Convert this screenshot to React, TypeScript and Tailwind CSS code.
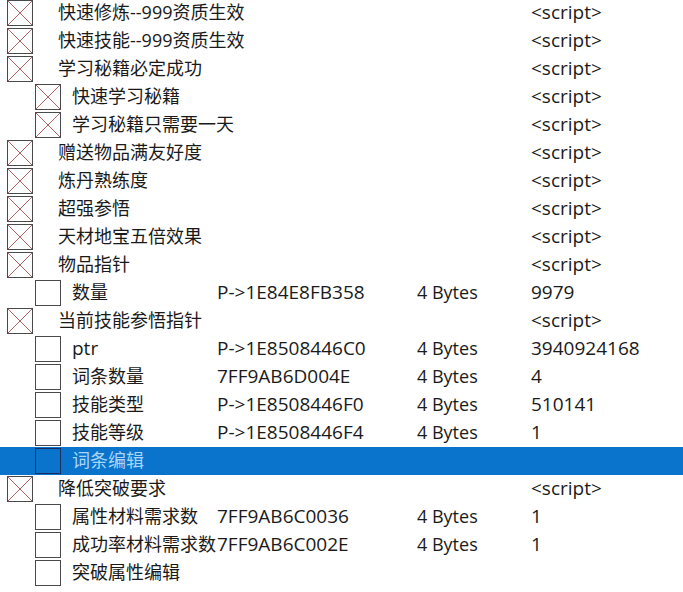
import React from "react";

type Row = {
  level: 0 | 1;
  checked: boolean;
  desc: string;
  addr?: string;
  type?: string;
  value?: string;
  selected?: boolean;
};

const rows: Row[] = [
  { level: 0, checked: true, desc: "快速修炼--999资质生效", value: "<script>" },
  { level: 0, checked: true, desc: "快速技能--999资质生效", value: "<script>" },
  { level: 0, checked: true, desc: "学习秘籍必定成功", value: "<script>" },
  { level: 1, checked: true, desc: "快速学习秘籍", value: "<script>" },
  { level: 1, checked: true, desc: "学习秘籍只需要一天", value: "<script>" },
  { level: 0, checked: true, desc: "赠送物品满友好度", value: "<script>" },
  { level: 0, checked: true, desc: "炼丹熟练度", value: "<script>" },
  { level: 0, checked: true, desc: "超强参悟", value: "<script>" },
  { level: 0, checked: true, desc: "天材地宝五倍效果", value: "<script>" },
  { level: 0, checked: true, desc: "物品指针", value: "<script>" },
  { level: 1, checked: false, desc: "数量", addr: "P->1E84E8FB358", type: "4 Bytes", value: "9979" },
  { level: 0, checked: true, desc: "当前技能参悟指针", value: "<script>" },
  { level: 1, checked: false, desc: "ptr", addr: "P->1E8508446C0", type: "4 Bytes", value: "3940924168" },
  { level: 1, checked: false, desc: "词条数量", addr: "7FF9AB6D004E", type: "4 Bytes", value: "4" },
  { level: 1, checked: false, desc: "技能类型", addr: "P->1E8508446F0", type: "4 Bytes", value: "510141" },
  { level: 1, checked: false, desc: "技能等级", addr: "P->1E8508446F4", type: "4 Bytes", value: "1" },
  { level: 1, checked: false, desc: "词条编辑", selected: true },
  { level: 0, checked: true, desc: "降低突破要求", value: "<script>" },
  { level: 1, checked: false, desc: "属性材料需求数", addr: "7FF9AB6C0036", type: "4 Bytes", value: "1" },
  { level: 1, checked: false, desc: "成功率材料需求数", addr: "7FF9AB6C002E", type: "4 Bytes", value: "1" },
  { level: 1, checked: false, desc: "突破属性编辑" },
];

function Box({ checked, selected }: { checked: boolean; selected?: boolean }) {
  return (
    <div
      className={`relative h-[26px] w-[26px] shrink-0 border ${
        selected ? "border-[#1b2d5e]" : "border-[#4a4a4a] bg-white"
      }`}
    >
      {checked && (
        <svg className="absolute inset-0 h-full w-full" viewBox="0 0 24 24" preserveAspectRatio="none">
          <line x1="0" y1="0" x2="24" y2="24" stroke="#b06464" strokeWidth="1" />
          <line x1="24" y1="0" x2="0" y2="24" stroke="#b06464" strokeWidth="1" />
        </svg>
      )}
    </div>
  );
}

export default function App() {
  return (
    <div
      className="h-[592px] w-[683px] overflow-hidden bg-white text-[18px] text-[#1a1a1a]"
      style={{ fontFamily: '"Open Sans", "Noto Sans CJK SC", sans-serif' }}
    >
      <div className="-mt-px flex flex-col">
        {rows.map((r, i) => (
          <div
            key={i}
            className={`flex h-[28px] items-center leading-none ${
              r.selected ? "bg-[#0a74cc] text-[#a9d6f7]" : ""
            }`}
          >
            <div className={r.level === 0 ? "w-[7px] shrink-0" : "w-[35px] shrink-0"} />
            <Box checked={r.checked} selected={r.selected} />
            <div
              className={`shrink-0 whitespace-nowrap pb-[2px] ${
                r.level === 0 ? "w-[184px] pl-[25px]" : "w-[156px] pl-[11px]"
              } ${r.desc === "ptr" ? "text-[19px]" : ""}`}
            >
              {r.desc}
            </div>
            <div className="w-[200px] shrink-0 whitespace-nowrap pb-[2px] text-[19px]">{r.addr}</div>
            <div className="w-[114px] shrink-0 whitespace-nowrap pb-[2px]">{r.type}</div>
            <div className="whitespace-nowrap pb-[2px] text-[19px]">{r.value}</div>
          </div>
        ))}
      </div>
    </div>
  );
}
